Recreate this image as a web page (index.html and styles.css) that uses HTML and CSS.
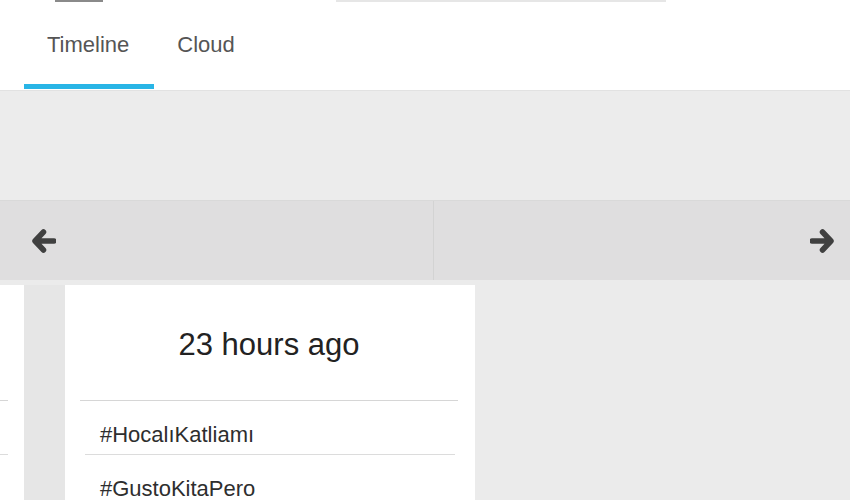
FILE: index.html
```html
<!DOCTYPE html>
<html lang="en">
<head>
    <meta charset="UTF-8">
    <meta name="viewport" content="width=device-width, initial-scale=1.0">
    <title>Trends</title>
    <link rel="stylesheet" href="styles.css">
</head>
<body>
    <div id="header">
        <div class="topbar">
            <span class="logo-edge"></span>
            <span class="search-edge"></span>
        </div>
        <ul class="tabs">
            <li class="tab active">Timeline</li>
            <li class="tab">Cloud</li>
        </ul>
    </div>
    <div class="band"></div>
    <div class="pager">
        <div class="pager-half left">
            <svg class="arrow" viewBox="0 0 26 26" width="26" height="26">
                <path d="M24 13H6 M13.5 4L5 13 13.5 22" fill="none" stroke="#404040" stroke-width="5.5" stroke-linejoin="round" stroke-linecap="round"/>
            </svg>
        </div>
        <div class="pager-half right">
            <svg class="arrow" viewBox="0 0 26 26" width="26" height="26">
                <path d="M2 13H20 M12.5 4L21 13 12.5 22" fill="none" stroke="#404040" stroke-width="5.5" stroke-linejoin="round" stroke-linecap="round"/>
            </svg>
        </div>
    </div>
    <div class="timeline">
        <div class="card partial">
            <div class="card-title"></div>
            <ul class="tags">
                <li>&nbsp;</li>
                <li>&nbsp;</li>
            </ul>
        </div>
        <div class="spine"></div>
        <div class="card">
            <div class="card-title">23 hours ago</div>
            <ul class="tags">
                <li>#HocalıKatliamı</li>
                <li>#GustoKitaPero</li>
            </ul>
        </div>
    </div>
</body>
</html>
```

FILE: styles.css
```css
html, body{
    margin: 0;
    height: 500px;
    overflow: hidden;
}
body{
    font-family: "Liberation Sans", Arial, sans-serif;
    background-color: #ebebeb;
}
#header{
    background-color: white;
    height: 90px;
}
.topbar{
    height: 3px;
    display: flex;
    align-items: flex-start;
}
.logo-edge{
    width: 48px;
    height: 2px;
    margin-left: 55px;
    background-color: #8a8a8a;
}
.search-edge{
    width: 330px;
    height: 2px;
    margin-left: 233px;
    background-color: #e6e6e6;
}
.tabs{
    list-style: none;
    margin: 0;
    padding: 0 0 0 24px;
    display: flex;
}
.tab{
    font-size: 22px;
    line-height: 26px;
    color: #555;
    padding: 29px 25px 26px 23px;
    border-bottom: 5px solid transparent;
}
.tab.active{
    border-bottom-color: #29b5e6;
}
.band{
    height: 110px;
    background-color: #ececec;
    border-top: 1px solid #e2e2e2;
    box-sizing: border-box;
}
.pager{
    height: 80px;
    display: flex;
    background-color: #dfdedf;
    border-top: 1px solid #d9d9d9;
    box-sizing: border-box;
}
.pager-half{
    flex: 1;
    display: flex;
    align-items: center;
}
.pager-half.left{
    padding-left: 30px;
}
.pager-half.right{
    justify-content: flex-end;
    padding-right: 14px;
    border-left: 1px solid #d3d3d3;
}
.timeline{
    display: flex;
    align-items: flex-start;
    margin-top: 5px;
}
.card{
    background-color: white;
    width: 410px;
    height: 230px;
    box-sizing: border-box;
    padding: 0 17px 0 15px;
}
.card.partial{
    width: 24px;
    padding: 0 16px 0 0;
}
.spine{
    width: 41px;
    height: 230px;
    background-color: #e6e6e6;
}
.card-title{
    font-size: 31px;
    line-height: 34px;
    color: #222;
    text-align: center;
    padding: 43px 0 38px 0;
    height: 34px;
    border-bottom: 1px solid #d6d6d6;
}
.tags{
    list-style: none;
    margin: 0;
    padding: 0 3px 0 5px;
}
.tags li{
    font-size: 22px;
    line-height: 26px;
    color: #2e2e2e;
    padding: 21px 0 6px 15px;
    border-bottom: 1px solid #dcdcdc;
}
.partial .tags{
    padding: 0;
}
.partial .tags li{
    padding-left: 0;
}
```
